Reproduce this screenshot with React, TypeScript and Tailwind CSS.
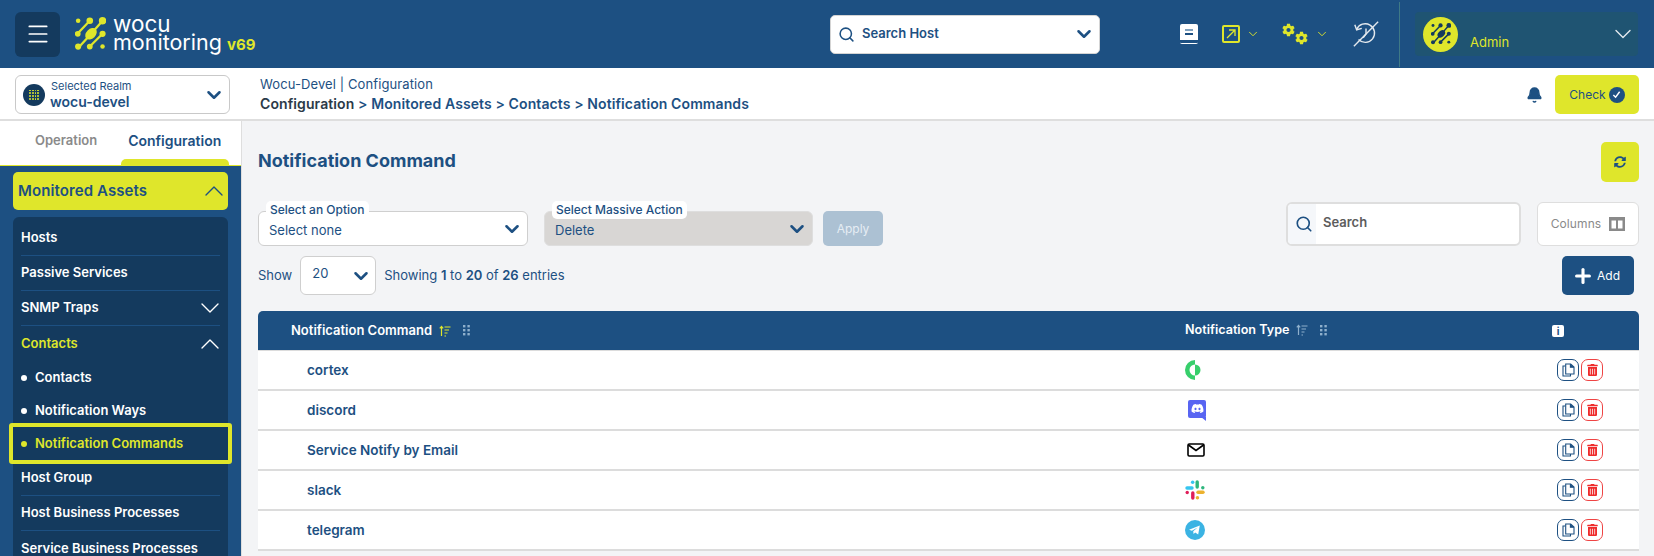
import { Bell, ChevronDown, ChevronUp, Menu, Plus, Search } from 'lucide-react';
import { FaCog, FaDiscord, FaSyncAlt, FaTrashAlt } from 'react-icons/fa';

const font = "font-['Inter','Liberation_Sans',sans-serif]";

function LogoMark({ className, color = '#dfe62b' }: { className?: string; color?: string }) {
  return (
    <svg className={className} viewBox="0 0 30 33" fill={color} stroke={color} aria-hidden="true">
      <g strokeWidth="2.2" strokeLinecap="round">
        <path d="M14.3 3.7 2.3 16.3" />
        <path d="M26.7 3.7 15.7 16.3 4.3 28.7" />
        <path d="M26.7 16.3 14.3 28.7" />
      </g>
      <g stroke="none">
        <circle cx="3" cy="3.7" r="2.2" />
        <circle cx="14.3" cy="3.7" r="3.2" />
        <circle cx="26.7" cy="3.7" r="3.6" />
        <circle cx="2.6" cy="16.3" r="2.8" />
        <ellipse cx="15.5" cy="16.3" rx="6.5" ry="4.6" transform="rotate(-45 15.5 16.3)" />
        <circle cx="26.7" cy="16.3" r="3" />
        <circle cx="3" cy="28.7" r="3" />
        <circle cx="14.3" cy="28.7" r="2.8" />
        <circle cx="26.7" cy="28.7" r="2.2" />
      </g>
    </svg>
  );
}

function SortIcon({ active }: { active?: boolean }) {
  return (
    <svg className={active ? 'w-[12px] h-[12px] text-[#dfe62b]' : 'w-[12px] h-[12px] text-[#8fb0cc]'} viewBox="0 0 12 12" fill="none" stroke="currentColor" strokeWidth="1.2" aria-hidden="true">
      <path d="M2.5 11V1.5M.8 3.4l1.7-2 1.7 2" />
      <path d="M5.5 2h6M5.5 5h4.5M5.5 8h3M5.5 11h1.5" />
    </svg>
  );
}

function DragIcon() {
  return (
    <svg className="w-[7px] h-[11px] text-[#8fb0cc]" viewBox="0 0 7 11" fill="currentColor" aria-hidden="true">
      {[0, 4, 8].map((y) => (
        <g key={y}>
          <rect x="0" y={y} width="2.4" height="2.4" />
          <rect x="4.4" y={y} width="2.4" height="2.4" />
        </g>
      ))}
    </svg>
  );
}

function CopyIcon() {
  return (
    <svg className="w-[13px] h-[14px]" viewBox="0 0 13 14" fill="none" stroke="#1d5082" strokeWidth="1.1" aria-hidden="true">
      <path d="M3.2 3H1v10h7.5v-2" />
      <path d="M3.7 1h5l3.3 3v7H3.7z" />
      <path d="M8.4 1v3.2H12" fill="#1d5082" />
    </svg>
  );
}

function CortexIcon() {
  return (
    <svg className="w-[16px] h-[20px]" viewBox="0 0 16 20" aria-hidden="true">
      <path d="M10 0v4.5A5.5 5.5 0 0 0 10 15.5V20A10 10 0 0 1 10 0Z" fill="#37cf6b" />
      <path d="M10 4.5A5.5 5.5 0 0 1 10 15.5Z" fill="#37cf6b" />
    </svg>
  );
}

function DiscordIcon() {
  return (
    <div className="relative w-[18px] h-[21px] ml-[3px]">
      <div className="w-[18px] h-[18px] rounded-[2px] bg-[#5865f2] flex items-center justify-center">
        <FaDiscord className="w-[13px] h-[13px] text-white" />
      </div>
      <svg className="absolute right-0 bottom-0 w-[5px] h-[4px]" viewBox="0 0 5 4" aria-hidden="true">
        <path d="M0 0h5v4z" fill="#5865f2" />
      </svg>
    </div>
  );
}

function MailIcon() {
  return (
    <svg className="w-[18px] h-[14px] ml-[2px]" viewBox="0 0 18 14" fill="none" stroke="#000" strokeWidth="1.6" aria-hidden="true">
      <rect x="1" y="1" width="16" height="12" rx="1.2" />
      <path d="M1.5 2 9 7.5 16.5 2" />
    </svg>
  );
}

function SlackIcon() {
  return (
    <svg className="w-[20px] h-[20px]" viewBox="0 0 20 20" fill="none" strokeWidth="3.4" strokeLinecap="round" aria-hidden="true">
      <path d="M2 8h5" stroke="#36c5f0" />
      <path d="M7.6 2.2h.1" stroke="#36c5f0" />
      <path d="M12.2 2v5" stroke="#2eb67d" />
      <path d="M17.8 7.6v.1" stroke="#2eb67d" />
      <path d="M13 12.2h5" stroke="#ecb22e" />
      <path d="M12.4 17.8h.1" stroke="#ecb22e" />
      <path d="M7.8 13v5" stroke="#e01e5a" />
      <path d="M2.2 12.4v.1" stroke="#e01e5a" />
    </svg>
  );
}

function TelegramIcon() {
  return (
    <svg className="w-[20px] h-[20px]" viewBox="0 0 20 20" aria-hidden="true">
      <circle cx="10" cy="10" r="10" fill="#3bb3e3" />
      <path d="M4 9.8 14.8 5.4 13.2 14.6 10.2 12.4 8.6 14 8.2 11.2 12.6 7.4 6.9 10.7Z" fill="#fff" />
    </svg>
  );
}

const rows = [
  { name: 'cortex', icon: <CortexIcon /> },
  { name: 'discord', icon: <DiscordIcon /> },
  { name: 'Service Notify by Email', icon: <MailIcon /> },
  { name: 'slack', icon: <SlackIcon /> },
  { name: 'telegram', icon: <TelegramIcon /> },
];

function Header() {
  return (
    <header className="h-[68px] bg-[#1d5082] flex items-center">
      <button className="ml-[15px] w-[45px] h-[45px] rounded-[6px] bg-[#143a5e] flex items-center justify-center text-white">
        <Menu className="w-[26px] h-[26px]" strokeWidth={1.6} />
      </button>
      <div className="ml-[15px] w-[755px] flex items-center">
        <LogoMark className="w-[31px] h-[34px]" />
        <div className="ml-[7px] text-white leading-[18px] mt-[1px]">
          <div className="text-[22.5px]">wocu</div>
          <div className="text-[21.5px] flex items-baseline">
            monitoring
            <span className="ml-[5px] text-[15px] font-bold text-[#dfe62b]">v69</span>
          </div>
        </div>
      </div>

      <div className="w-[270px] h-[39px] rounded-[5px] bg-white border border-[#d4d4d4] flex items-center pl-[7px] pr-[4px]">
        <Search className="w-[17px] h-[17px] text-[#1d5082]" strokeWidth={2.2} />
        <span className="ml-[7px] text-[13px] font-semibold text-[#1d5082]">Search Host</span>
        <ChevronDown className="ml-auto w-[22px] h-[22px] text-[#1d5082]" strokeWidth={2.8} />
      </div>

      <div className="ml-[80px] w-[18px] h-[20px] rounded-[2px] bg-white flex flex-col items-center pt-[5px] gap-[2px] overflow-hidden">
        <span className="w-[8px] h-[2px] bg-[#7fa0bd]" />
        <span className="w-[8px] h-[2px] bg-[#1d5082]" />
        <span className="mt-[3px] w-full h-[3px] bg-[#1d5082]" />
      </div>
      <div className="ml-[24px] w-[18px] h-[18px] rounded-[2px] border-2 border-[#dfe62b] flex items-center justify-center">
        <svg className="w-[10px] h-[10px]" viewBox="0 0 10 10" fill="none" stroke="#dfe62b" strokeWidth="1.3" aria-hidden="true">
          <path d="M1 9 9 1M3 1h6v6" />
        </svg>
      </div>
      <ChevronDown className="ml-[6px] w-[14px] h-[14px] text-[#dfe62b]" strokeWidth={1.6} />
      <div className="ml-[22px] w-[26px] h-[22px] flex justify-between">
        <FaCog className="self-start w-[14px] h-[14px] text-[#dfe62b]" />
        <FaCog className="self-end w-[14px] h-[14px] text-[#dfe62b]" />
      </div>
      <ChevronDown className="ml-[7px] w-[14px] h-[14px] text-[#dfe62b]" strokeWidth={1.6} />
      <svg className="ml-[23px] w-[28px] h-[28px]" viewBox="0 0 30 28" fill="none" stroke="#e4e9ee" strokeWidth="1.5" aria-hidden="true">
        <path d="M5 9a10 10 0 1 1 2 11" />
        <path d="M3 4l2 5.5L10.5 8" />
        <path d="M15 8v6l-3 4" />
        <path d="M28 1 2 27" />
      </svg>
      <div className="ml-[19px] w-px h-[65px] bg-[#3f7a86]" />
      <div className="ml-[15px] w-[223px] h-[44px] rounded-[4px] bg-[#1f5472] flex items-center pl-[8px] pr-[1px]">
        <div className="w-[35px] h-[35px] rounded-full bg-[#dfe62b] flex items-center justify-center">
          <LogoMark className="w-[20px] h-[22px]" color="#143a5e" />
        </div>
        <span className="ml-[12px] mt-[18px] text-[13px] text-[#dfe62b]">Admin</span>
        <ChevronDown className="ml-auto w-[28px] h-[28px] text-[#e4e9ee]" strokeWidth={1.2} />
      </div>
    </header>
  );
}

function SubHeader() {
  return (
    <div className="h-[53px] pt-[2px] bg-white border-b-2 border-[#dedede] flex items-center">
      <div className="ml-[15px] w-[215px] h-[39px] rounded-[6px] border border-[#c9c9c9] flex items-center pl-[7px] pr-[4px]">
        <div className="w-[22px] h-[22px] rounded-full bg-[#143a5e] grid grid-cols-4 gap-[1px] p-[6px]">
          {Array.from({ length: 16 }).map((_, i) => (
            <span key={i} className="bg-[#dfe62b] rounded-full" />
          ))}
        </div>
        <div className="ml-[5px] flex flex-col">
          <span className="text-[11px] leading-[13px] ml-[1px] text-[#1d5082]">Selected Realm</span>
          <span className="text-[14px] leading-[17px] font-semibold text-[#1d5082]">wocu-devel</span>
        </div>
        <ChevronDown className="ml-auto w-[22px] h-[22px] text-[#1d5082]" strokeWidth={2.8} />
      </div>
      <div className="ml-[30px] -mt-[2px] flex flex-col gap-[2px]">
        <div className="text-[13px] leading-[18px] tracking-[0.1px] text-[#1d5082]">Wocu-Devel | Configuration</div>
        <div className="text-[14px] leading-[18px] tracking-[0.1px] font-semibold text-[#1d5082]">
          <span className="text-[#2b3a48]">Configuration</span> &gt; Monitored Assets &gt; Contacts &gt; Notification Commands
        </div>
      </div>
      <Bell className="ml-auto w-[17px] h-[18px] text-[#1d5082] fill-[#1d5082]" />
      <button className="ml-[12px] mr-[15px] w-[84px] h-[39px] rounded-[5px] bg-[#dfe62b] flex items-center justify-center gap-[3px] text-[12px] text-[#1d5082]">
        Check
        <span className="w-[16px] h-[16px] rounded-full bg-[#1d5082] flex items-center justify-center">
          <svg className="w-[9px] h-[9px]" viewBox="0 0 10 10" fill="none" stroke="#fff" strokeWidth="1.6" aria-hidden="true">
            <path d="M1.5 5.5 4 8l4.5-6" />
          </svg>
        </span>
      </button>
    </div>
  );
}

function MenuRow({ label, line = true, icon, active }: { label: string; line?: boolean; icon?: 'up' | 'down'; active?: boolean }) {
  return (
    <div className={`h-[35px] mx-[8px] flex items-center justify-between ${line ? 'border-b border-[#1d5082]' : ''}`}>
      <span className={`text-[13px] font-semibold ${active ? 'text-[#dfe62b]' : 'text-white'}`}>{label}</span>
      {icon === 'up' && <ChevronUp className="-mr-[6px] w-[32px] h-[32px] text-white" strokeWidth={1} />}
      {icon === 'down' && <ChevronDown className="-mr-[6px] w-[32px] h-[32px] text-white" strokeWidth={1} />}
    </div>
  );
}

function SubRow({ label }: { label: string }) {
  return (
    <div className="h-[33px] ml-[8px] flex items-center gap-[8px]">
      <span className="w-[6px] h-[6px] rounded-full bg-white" />
      <span className="text-[13px] font-semibold text-white">{label}</span>
    </div>
  );
}

function Sidebar() {
  return (
    <aside className="w-[242px] shrink-0 border-r border-[#dedede] bg-white flex flex-col">
      <div className="h-[44px] shrink-0 relative flex font-semibold">
        <span className="ml-[35px] mt-[10px] text-[13px] text-[#8a8a8a]">Operation</span>
        <span className="ml-[31px] mt-[9px] text-[14px] text-[#1d5082]">Configuration</span>
        <span className="absolute left-[121px] bottom-0 w-[108px] h-[6px] rounded-t-[5px] bg-[#dfe62b]" />
      </div>
      <div className="flex-1 bg-[#1d5082] border-t border-[#dfe62b] px-[13px] pt-[6px]">
        <div className="h-[38px] rounded-[5px] bg-[#dfe62b] flex items-center justify-between pl-[5px]">
          <span className="text-[15px] tracking-[0.1px] font-semibold text-[#1d5082]">Monitored Assets</span>
          <ChevronUp className="mr-[-2px] w-[32px] h-[32px] text-[#1d5082]" strokeWidth={1} />
        </div>
        <div className="mt-[7px] rounded-t-[6px] bg-[#143a5e] pt-[4px] h-[400px]">
          <MenuRow label="Hosts" />
          <MenuRow label="Passive Services" />
          <MenuRow label="SNMP Traps" icon="down" />
          <MenuRow label="Contacts" icon="up" active line={false} />
          <SubRow label="Contacts" />
          <SubRow label="Notification Ways" />
          <div className="relative z-10 -mx-[4px] -mt-[4px] -mb-[3px] h-[41px] rounded-[3px] border-[4px] border-[#dfe62b] bg-[#143a5e] flex items-center gap-[8px] pl-[8px]">
            <span className="w-[6px] h-[6px] rounded-full bg-[#dfe62b]" />
            <span className="text-[13px] font-semibold text-[#dfe62b]">Notification Commands</span>
          </div>
          <MenuRow label="Host Group" />
          <MenuRow label="Host Business Processes" />
          <MenuRow label="Service Business Processes" line={false} />
        </div>
      </div>
    </aside>
  );
}

function Toolbar() {
  return (
    <>
      <div className="flex items-center justify-between h-[40px] mt-[21px]">
        <h1 className="-mt-[4px] text-[18px] font-bold text-[#1d5082]">Notification Command</h1>
        <button className="w-[38px] h-[40px] rounded-[5px] bg-[#dfe62b] flex items-center justify-center">
          <FaSyncAlt className="w-[12px] h-[12px] text-[#1d5082]" />
        </button>
      </div>

      <div className="mt-[20px] flex items-end">
        <div className="relative w-[270px] h-[35px] rounded-[6px] bg-white border border-[#cfcfcf] flex items-center pl-[10px] pr-[4px]">
          <span className="absolute left-[7px] -top-[11px] px-[4px] h-[18px] rounded-[5px] bg-white text-[12px] leading-[18px] font-medium text-[#1d5082]">Select an Option</span>
          <span className="mt-[4px] text-[13px] text-[#1d5082]">Select none</span>
          <ChevronDown className="ml-auto w-[22px] h-[22px] text-[#1d5082]" strokeWidth={2.8} />
        </div>
        <div className="relative ml-[16px] w-[269px] h-[35px] rounded-[6px] bg-[#d8d6d4] border border-[#dedede] flex items-center pl-[10px] pr-[4px]">
          <span className="absolute left-[7px] -top-[11px] px-[4px] h-[18px] rounded-[5px] bg-white text-[12px] leading-[18px] font-medium text-[#1d5082]">Select Massive Action</span>
          <span className="mt-[4px] text-[13px] text-[#1d5082]">Delete</span>
          <ChevronDown className="ml-auto w-[22px] h-[22px] text-[#1d5082]" strokeWidth={2.8} />
        </div>
        <button className="ml-[10px] w-[60px] h-[35px] rounded-[5px] bg-[#acc1d3] text-[12px] text-[#e6edf3]">Apply</button>
        <div className="ml-auto w-[235px] h-[44px] rounded-[6px] bg-white border-2 border-[#dedede] flex items-center overflow-hidden">
          <div className="w-[28px] h-full bg-[#f5f7fa] flex items-center justify-center pl-[3px]">
            <Search className="w-[18px] h-[18px] text-[#1d5082]" strokeWidth={2.2} />
          </div>
          <span className="ml-[7px] text-[13px] font-semibold text-[#5c5c5c] -mt-[3px]">Search</span>
        </div>
        <div className="ml-[16px] w-[102px] h-[44px] rounded-[6px] bg-white border border-[#dedede] flex items-center justify-center gap-[8px] text-[12px] tracking-[0.1px] text-[#8a8a8a]">
          Columns
          <svg className="w-[16px] h-[14px]" viewBox="0 0 16 14" aria-hidden="true">
            <path d="M0 0h16v14H0zM2.5 3.500v8h4.500v-8zm6.500 0v8h4.500v-8z" fill="#8a8a8a" fillRule="evenodd" />
          </svg>
        </div>
      </div>

      <div className="mt-[10px] h-[39px] flex items-center text-[13px] text-[#1d5082]">
        <span>Show</span>
        <div className="ml-[8px] w-[76px] h-[39px] rounded-[6px] bg-white border border-[#cfcfcf] flex items-center pl-[11px] pr-[3px]">
          <span className="-mt-[4px]">20</span>
          <ChevronDown className="ml-auto w-[22px] h-[22px]" strokeWidth={2.8} />
        </div>
        <span className="ml-[8px]">
          Showing <b className="font-semibold">1</b> to <b className="font-semibold">20</b> of <b className="font-semibold">26</b> entries
        </span>
        <button className="ml-auto mr-[5px] w-[72px] h-[39px] rounded-[5px] bg-[#1d5082] flex items-center pl-[10px] gap-[3px] text-[12px] text-white">
          <Plus className="w-[22px] h-[22px]" strokeWidth={3.4} />
          Add
        </button>
      </div>
    </>
  );
}

function Table() {
  return (
    <div className="mt-[16px]">
      <div className="h-[39px] rounded-t-[5px] bg-[#1d5082] grid grid-cols-[927px_367px_1fr] items-center text-[13px] font-semibold text-white">
        <div className="pl-[33px] flex items-center gap-[7px]">
          Notification Command <SortIcon active /> <span className="ml-[5px] flex"><DragIcon /></span>
        </div>
        <div className="flex items-center gap-[7px]">
          <span className="text-[12.6px]">Notification Type</span> <SortIcon /> <span className="ml-[5px] flex"><DragIcon /></span>
        </div>
        <div>
          <span className="block w-[12px] h-[12px] rounded-[2px] bg-white text-[#1d5082] text-[10px] leading-[12px] font-bold text-center">i</span>
        </div>
      </div>
      <div className="bg-white border-t border-[#dcdcdc]">
        {rows.map((row) => (
          <div key={row.name} className="h-[40px] border-b-2 border-[#dcdcdc] grid grid-cols-[927px_367px_1fr] items-center">
            <div className="pl-[49px] text-[13.5px] font-semibold text-[#1d5082]">{row.name}</div>
            <div className="flex items-center">{row.icon}</div>
            <div className="flex gap-[2px] ml-[5px]">
              <span className="w-[22px] h-[22px] rounded-[7px] border border-[#1d5082] flex items-center justify-center">
                <CopyIcon />
              </span>
              <span className="w-[22px] h-[22px] rounded-[7px] border border-[#ef4444] flex items-center justify-center">
                <FaTrashAlt className="w-[11px] h-[12px] text-[#ef2b2b]" />
              </span>
            </div>
          </div>
        ))}
      </div>
    </div>
  );
}

export default function App() {
  return (
    <div className={`w-[1654px] h-[556px] overflow-hidden flex flex-col ${font}`}>
      <Header />
      <SubHeader />
      <div className="flex-1 flex min-h-0">
        <Sidebar />
        <main className="flex-1 bg-[#f3f4f6] pl-[16px] pr-[15px] min-w-0">
          <Toolbar />
          <Table />
        </main>
      </div>
    </div>
  );
}
